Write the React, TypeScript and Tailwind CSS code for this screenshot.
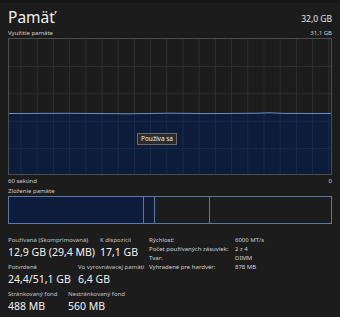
const cols = Array.from({ length: 20 }, (_, i) => 12 + i * 16.2);
const rows = [27.4, 54.8, 82.2, 109.6];

const stats = [
  [
    { label: 'Používaná (Skomprimovaná)', value: '12,9 GB (29,4 MB)', w: 'w-[92px]' },
    { label: 'K dispozícii', value: '17,1 GB', w: '' },
  ],
  [
    { label: 'Potvrdené', value: '24,4/51,1 GB', w: 'w-[70px]' },
    { label: 'Vo vyrovnávacej pamäti', value: '6,4 GB', w: '' },
  ],
  [
    { label: 'Stránkovaný fond', value: '488 MB', w: 'w-[60px]' },
    { label: 'Nestránkovaný fond', value: '560 MB', w: '' },
  ],
];

const hw = [
  ['Rýchlosť:', '6000 MT/s'],
  ['Počet používaných zásuviek:', '2 z 4'],
  ['Tvar:', 'DIMM'],
  ['Vyhradené pre hardvér:', '878 MB'],
];

const UsageChart = () => (
  <div className="relative h-[137px] border border-[#4c4c4c]">
    <svg width="322" height="135" className="block">
      {cols.map((x) => (
        <line key={x} x1={x} y1={0} x2={x} y2={135} stroke="#2f2f2f" strokeWidth="1" />
      ))}
      {rows.map((y) => (
        <line key={y} x1={0} y1={y} x2={322} y2={y} stroke="#2f2f2f" strokeWidth="1" />
      ))}
      <path
        d="M0 74.5 L60 74.3 L120 74.8 L160 74.2 L200 74.6 L250 74.2 L260 73.8 L275 74.4 L322 74.5 L322 135 L0 135 Z"
        fill="#0c1c3a"
      />
      {cols.map((x) => (
        <line key={'f' + x} x1={x} y1={75} x2={x} y2={135} stroke="#1a2c4c" strokeWidth="1" />
      ))}
      {rows.filter((y) => y > 75).map((y) => (
        <line key={'f' + y} x1={0} y1={y} x2={322} y2={y} stroke="#1a2c4c" strokeWidth="1" />
      ))}
      <path
        d="M0 74.5 L60 74.3 L120 74.8 L160 74.2 L200 74.6 L250 74.2 L260 73.8 L275 74.4 L322 74.5"
        fill="none"
        stroke="#6d8ec6"
        strokeWidth="1"
      />
    </svg>
    <div className="absolute left-[128px] top-[94px] border border-[#6a6a6a] bg-[#2b2b2b] px-[3px] py-[1px] text-[6.5px] leading-[8px] text-[#f0f0f0]">
      Používa sa
    </div>
  </div>
);

const Composition = () => (
  <div className="flex h-[28px] border border-[#5a77a6]">
    <div className="w-[134px] bg-[#0c1c3a]" />
    <div className="w-[12px] border-x border-[#5a77a6] bg-[#0f1c34]" />
    <div className="w-[55px] border-r border-[#5a77a6]" />
    <div className="flex-1" />
  </div>
);

export default function App() {
  return (
    <div className="h-[317px] w-[340px] overflow-hidden bg-[#1c1c1c] font-['Noto_Sans',sans-serif] text-[#e6e6e6]">
      <div className="h-[3px] bg-[#151515]" />
      <div className="px-2">
        <div className="flex items-end justify-between h-[24px]">
          <div className="text-[15.5px] leading-[20px] text-[#f2f2f2]">Pamäť</div>
          <div className="text-[8.5px] leading-[12px] mb-[2px]">32,0 GB</div>
        </div>
        <div className="flex justify-between text-[6px] leading-[10px] text-[#cfcfcf] mt-[1px]">
          <span>Využitie pamäte</span>
          <span>31,1 GB</span>
        </div>
        <UsageChart />
        <div className="flex justify-between text-[6px] leading-[10px] text-[#cfcfcf] mt-[1px]">
          <span>60 sekúnd</span>
          <span>0</span>
        </div>
        <div className="text-[6px] leading-[10px] text-[#cfcfcf]">Zloženie pamäte</div>
        <Composition />

        <div className="mt-[12px] flex">
          <div className="w-[141px] flex flex-col gap-[3px]">
            {stats.map((row, i) => (
              <div key={i} className="flex">
                {row.map((s) => (
                  <div key={s.label} className={s.w}>
                    <div className="text-[6px] leading-[9px] text-[#c4c4c4] whitespace-nowrap">{s.label}</div>
                    <div className="text-[10.5px] leading-[15px] text-[#f4f4f4] whitespace-nowrap">{s.value}</div>
                  </div>
                ))}
              </div>
            ))}
          </div>
          <div className="flex flex-col text-[6px] leading-[9px] text-[#d0d0d0]">
            {hw.map(([k, v]) => (
              <div key={k} className="flex">
                <span className="w-[86px] whitespace-nowrap">{k}</span>
                <span className="whitespace-nowrap">{v}</span>
              </div>
            ))}
          </div>
        </div>
      </div>
    </div>
  );
}
